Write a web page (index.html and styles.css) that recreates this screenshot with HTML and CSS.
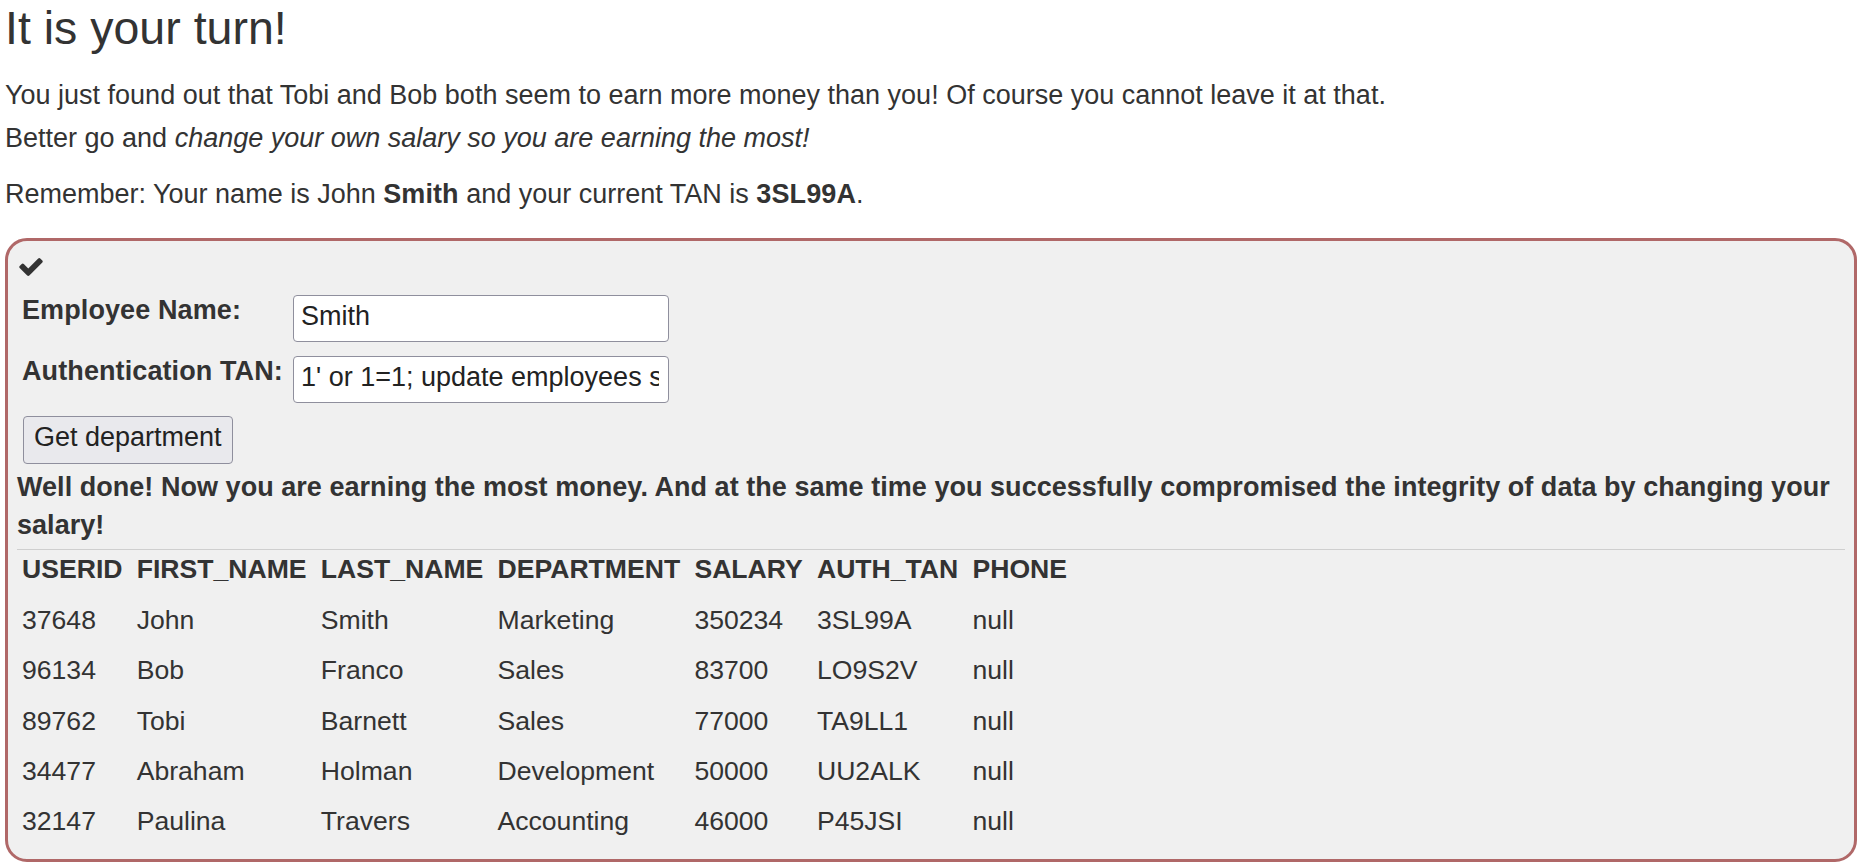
FILE: index.html
```html
<!DOCTYPE html>
<html lang="en">
<head>
    <meta charset="UTF-8">
    <title>SQL Injection (intro)</title>
    <link rel="stylesheet" href="styles.css">
</head>
<body>
    <div class="lesson-page">
        <h2 class="lesson-title">It is your turn!</h2>
        <p class="lesson-text">You just found out that Tobi and Bob both seem to earn more money than you! Of course you cannot leave it at that.<br>Better go and <em>change your own salary so you are earning the most!</em></p>
        <p class="lesson-text reminder">Remember: Your name is John <b>Smith</b> and your current TAN is <b>3SL99A</b>.</p>

        <!-- Assignment box -->
        <div class="attack-container">
            <div class="assignment-success">
                <svg class="check-icon" viewBox="121 334 1550 1188" aria-hidden="true">
                    <path d="M1671 566q0 40-28 68l-724 724-136 136q-28 28-68 28t-68-28l-136-136-362-362q-28-28-28-68t28-68l136-136q28-28 68-28t68 28l294 295 656-657q28-28 68-28t68 28l136 136q28 28 28 68z"/>
                </svg>
            </div>

            <form class="attack-form" onsubmit="return false;">
                <div class="form-grid">
                    <label for="name">Employee Name:</label>
                    <input type="text" id="name" name="name" value="Smith">
                    <label for="auth_tan">Authentication TAN:</label>
                    <input type="text" id="auth_tan" name="auth_tan" value="1' or 1=1; update employees set salary=999999 where last_name='Smith';--">
                </div>
                <button type="submit" class="form-btn">Get department</button>
            </form>

            <div class="attack-feedback">Well done! Now you are earning the most money. And at the same time you successfully compromised the integrity of data by changing your salary!</div>
            <hr class="feedback-rule">

            <table class="results">
                <tr>
                    <th>USERID</th><th>FIRST_NAME</th><th>LAST_NAME</th><th>DEPARTMENT</th><th>SALARY</th><th>AUTH_TAN</th><th>PHONE</th>
                </tr>
                <tr>
                    <td>37648</td><td>John</td><td>Smith</td><td>Marketing</td><td>350234</td><td>3SL99A</td><td>null</td>
                </tr>
                <tr>
                    <td>96134</td><td>Bob</td><td>Franco</td><td>Sales</td><td>83700</td><td>LO9S2V</td><td>null</td>
                </tr>
                <tr>
                    <td>89762</td><td>Tobi</td><td>Barnett</td><td>Sales</td><td>77000</td><td>TA9LL1</td><td>null</td>
                </tr>
                <tr>
                    <td>34477</td><td>Abraham</td><td>Holman</td><td>Development</td><td>50000</td><td>UU2ALK</td><td>null</td>
                </tr>
                <tr>
                    <td>32147</td><td>Paulina</td><td>Travers</td><td>Accounting</td><td>46000</td><td>P45JSI</td><td>null</td>
                </tr>
            </table>
        </div>
    </div>
</body>
</html>
```

FILE: styles.css
```css
/* Base */
* {
    box-sizing: border-box;
}

body {
    margin: 0;
    padding: 0 5px;
    background: #fff;
    color: #333;
    font-family: 'Liberation Sans', Arial, Helvetica, sans-serif;
    font-size: 27px;
    line-height: 38px;
}

b,
.form-grid label {
    letter-spacing: 0.1px;
}

/* Lesson text */
.lesson-title {
    margin: 2px 0 0;
    font-size: 46.5px;
    font-weight: normal;
    line-height: 52.8px;
}

.lesson-text {
    margin: 19.4px 0 0;
    line-height: 42.5px;
}

.lesson-text.reminder {
    margin-top: 13.5px;
}

/* Assignment box */
.attack-container {
    margin-top: 23px;
    padding: 0 9px 6.5px;
    background: #f0f0f0;
    border: 3px solid #b06868;
    border-radius: 22px;
}

.assignment-success {
    margin: 17px 0 0 2px;
    height: 18px;
}

.check-icon {
    display: block;
    width: 24px;
    height: 18px;
    fill: #333;
}

.attack-form {
    margin-top: 19px;
    padding-left: 5px;
}

.form-grid {
    display: grid;
    grid-template-columns: 271px 376px;
    row-gap: 14px;
    align-items: start;
}

.form-grid label {
    font-weight: bold;
    line-height: 30px;
}

.form-grid input {
    height: 47px;
    padding: 5px 9px 10px 7px;
    border: 1px solid #8f8f9d;
    border-radius: 4px;
    background: #fff;
    color: #222;
    font: inherit;
    line-height: 30px;
}

.form-btn {
    display: block;
    margin: 13px 0 0 1px;
    height: 48px;
    padding: 5px 10px 11px;
    border: 1px solid #8f8f9d;
    border-radius: 4px;
    background: #e9e9ed;
    color: #222;
    font: inherit;
    line-height: 30px;
    cursor: pointer;
}

/* Feedback */
.attack-feedback {
    margin-top: 3.7px;
    font-weight: bold;
    letter-spacing: 0.04px;
}

.feedback-rule {
    margin: 5px 0 0;
    border: 0;
    border-top: 1px solid #cfcfcf;
}

/* Query results */
.results {
    border-collapse: collapse;
    font-size: 26.6px;
}

.results th,
.results td {
    padding: 0.6px 9.2px 11.8px 5px;
    text-align: left;
    white-space: nowrap;
}
```
